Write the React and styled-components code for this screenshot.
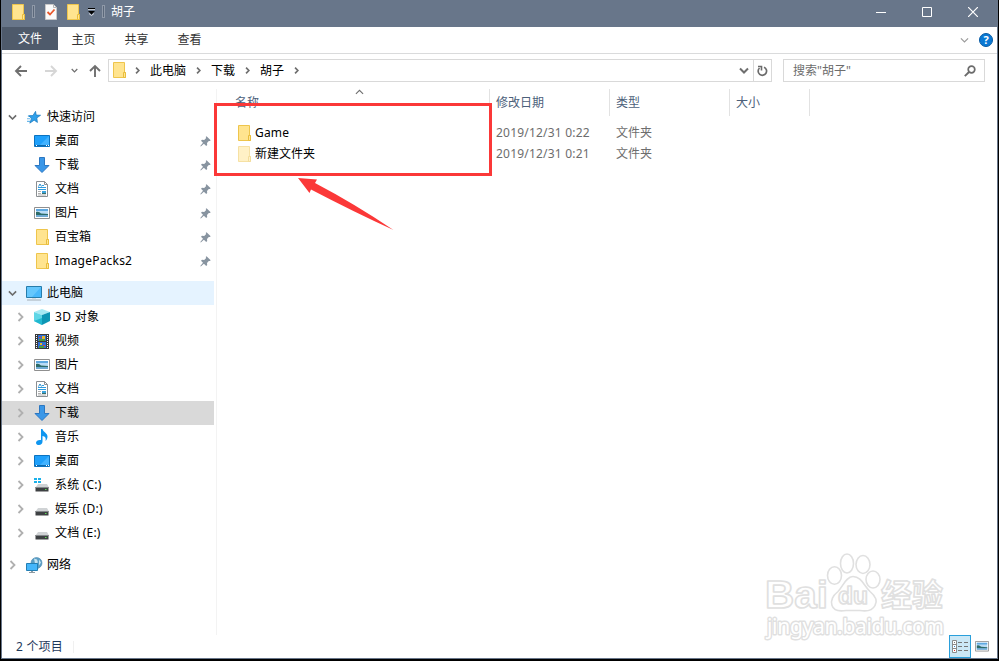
import styled, { createGlobalStyle, css } from "styled-components";

const GlobalStyle = createGlobalStyle`
  * {
    box-sizing: border-box;
  }
  body {
    margin: 0;
    background: #000;
    font-family: "Noto Sans", "Noto Sans CJK SC", sans-serif;
    font-size: 12px;
    line-height: 16px;
    color: #000;
  }
`;

const Desktop = styled.div`
  width: 999px;
  height: 661px;
  padding: 0 1px 2px;
  background: #000;
  overflow: hidden;
  position: relative;
`;

const Window = styled.div`
  height: 659px;
  display: flex;
  flex-direction: column;
  background: #fff;
  border: 1px solid #68768a;
  border-top: none;
  white-space: nowrap;
`;

const TitleBar = styled.header`
  height: 27px;
  flex: none;
  display: flex;
  align-items: flex-start;
  background: #68768a;
  color: #fff;
`;

const QuickTools = styled.div`
  flex: 1;
  height: 23px;
  display: flex;
  align-items: center;
  padding-left: 10px;
`;

const ToolSlot = styled.span`
  display: flex;
  width: ${(props) => props.$width}px;
`;

const Divider = styled.span`
  width: 3px;
  height: 13px;
  border: 1px solid #8f99a8;
  background: #5b687a;
  margin-right: ${(props) => props.$gap}px;
`;

const Caption = styled.span`
  line-height: 24px;
  height: 23px;
`;

const Controls = styled.div`
  display: flex;
  padding-right: 1px;
`;

const ControlButton = styled.span`
  width: 46px;
  height: 23px;
  display: flex;
  align-items: center;
  justify-content: center;
`;

const Ribbon = styled.nav`
  height: 27px;
  flex: none;
  display: flex;
  border-bottom: 1px solid #dadbdc;
`;

const RibbonTab = styled.span`
  width: ${(props) => props.$width || 53}px;
  height: 23px;
  line-height: 24px;
  padding: 1px 2px 0 0;
  text-align: center;
  color: #333;
  ${(props) =>
    props.$active &&
    css`
      color: #fff;
      background: #4e5a6b;
      padding-top: 0;
      padding-right: 0;
    `}
`;

const RibbonEnd = styled.div`
  margin-left: auto;
  display: flex;
  align-items: center;
  gap: 10px;
  padding-right: 4px;
`;

const AddressRow = styled.div`
  height: 35px;
  flex: none;
  display: flex;
  align-items: flex-start;
  padding: 5px 12px 0 12px;
`;

const NavButtons = styled.div`
  width: 94px;
  height: 23px;
  display: flex;
  align-items: center;
`;

const AddressBox = styled.div`
  width: 664px;
  height: 23px;
  display: flex;
  align-items: center;
  border: 1px solid #d9d9d9;
  padding-left: 4px;
`;

const AddressFolder = styled.span`
  display: flex;
  padding-bottom: 1px;
`;

const Crumb = styled.span`
  display: flex;
  align-items: center;
  line-height: 20px;
  height: 21px;
  margin-left: 8px;
  gap: 10px;
`;

const CrumbChevron = styled.span`
  display: flex;
  width: 7px;
  margin-left: ${(props) => props.$left || 0}px;
`;

const AddressEnd = styled.div`
  margin-left: auto;
  display: flex;
  height: 21px;
`;

const AddressButton = styled.span`
  display: flex;
  align-items: center;
  justify-content: center;
  width: 18px;
  ${(props) => props.$split && "border-left: 1px solid #d9d9d9;"}
`;

const SearchBox = styled.div`
  width: 202px;
  height: 23px;
  margin-left: 11px;
  padding: 0 8px 0 9px;
  display: flex;
  align-items: center;
  justify-content: space-between;
  border: 1px solid #d9d9d9;
  color: #6d6d6d;
`;

const Body = styled.div`
  flex: 1;
  min-height: 0;
  display: flex;
`;

const Sidebar = styled.aside`
  width: 215px;
  padding: 16px 2px 0 0;
  border-right: 1px solid #f3f3f3;
`;

const Group = styled.section`
  margin-bottom: 8px;
`;

const TreeRow = styled.div`
  height: 24px;
  display: flex;
  align-items: center;
  padding: 0 3px 0 ${(props) => (props.$child ? 12 : 4)}px;
  background: ${(props) => props.$background || "transparent"};
`;

const Arrow = styled.span`
  display: flex;
  justify-content: center;
  width: 12px;
  margin-right: 7px;
`;

const IconBox = styled.span`
  display: flex;
  width: 18px;
  height: 18px;
  align-items: center;
  justify-content: center;
  margin-right: 4px;
`;

const TreeLabel = styled.span`
  flex: 1;
  letter-spacing: ${(props) => props.$spacing || 0}px;
`;

const FileList = styled.main`
  flex: 1;
  display: flex;
  flex-direction: column;
`;

const Columns = styled.div`
  display: grid;
  grid-template-columns: 273px 120px 120px 80px;
  height: 27px;
`;

const ColumnHead = styled.div`
  border-right: 1px solid #e2e2e2;
  padding-left: ${(props) => (props.$first ? 18 : 6)}px;
  line-height: 27px;
  color: #4c607a;
  display: flex;
  align-items: flex-start;
`;

const SortMark = styled.span`
  display: flex;
  margin-left: 96px;
`;

const Files = styled.div`
  padding-top: 6px;
`;

const FileRow = styled.div`
  display: grid;
  grid-template-columns: 273px 120px 120px;
  height: 21px;
  line-height: 21px;
`;

const FileName = styled.div`
  display: flex;
  align-items: center;
  padding-left: 21px;
  gap: 4px;
  letter-spacing: ${(props) => props.$spacing || 0}px;
`;

const FileCell = styled.div`
  padding-left: 6px;
  color: #6d6d6d;
  letter-spacing: ${(props) => props.$spacing || 0}px;
`;

const StatusBar = styled.footer`
  height: 23px;
  flex: none;
  display: flex;
  align-items: center;
  justify-content: space-between;
  padding: 0 8px 0 14px;
  color: #1e395b;
`;

const ItemCount = styled.span`
  padding-right: 10px;
  line-height: 12px;
  letter-spacing: 0.2px;
  border-right: 1px solid #f0f0f0;
`;

const ViewButtons = styled.div`
  display: flex;
  align-items: center;
  gap: 4px;
`;

const ViewButton = styled.span`
  width: 22px;
  height: 23px;
  display: flex;
  align-items: center;
  justify-content: center;
  background: #cce8f6;
  border: 1px solid #2a9fdb;
`;

const Highlight = styled.div`
  position: absolute;
  left: 214px;
  top: 103px;
  width: 278px;
  height: 73px;
  border: 3px solid #fb3838;
`;

const Pointer = styled.svg`
  position: absolute;
  left: 294px;
  top: 174px;
`;

const Watermark = styled.svg`
  position: absolute;
  left: 760px;
  top: 548px;
`;

const FolderIcon = ({ faded }) => (
  <svg width="13" height="16" viewBox="0 0 13 16" opacity={faded ? 0.5 : 1}>
    <path d="M.5.5h11v10h1v5H.5z" fill="#ffe48f" stroke="#eec54c" />
    <path d="M10.5 10.5h2v5h-2z" fill="#ffe693" stroke="#e9bd3c" />
  </svg>
);

const CheckPageIcon = () => (
  <svg width="12" height="16" viewBox="0 0 12 16">
    <path d="M.5.5h8l3 3v12H.5z" fill="#fafafa" stroke="#c8c8c8" />
    <path d="M8.5.5v3h3" fill="none" stroke="#b5b5b5" />
    <path d="M2.5 8l2.500 2.500 4.500-5" fill="none" stroke="#e8572b" strokeWidth="1.800" />
  </svg>
);

const CustomizeIcon = () => (
  <svg width="8" height="9" viewBox="0 0 8 9">
    <path d="M0 1h7v1H0z" fill="#000" />
    <path d="M0 2h7v1H0z" fill="#c7ccd3" />
    <path d="M1 6.500l2.500 2L6 6.500" fill="none" stroke="#dfe2e6" />
    <path d="M0 4h7L3.500 7.500z" fill="#000" />
  </svg>
);

const chevrons = {
  right: ["M1.5 1l4 4-4 4", 7, 10],
  down: ["M1 1.5l4 4 4-4", 10, 7],
  up: ["M1 5.5l4-4 4 4", 10, 7],
};

const Chevron = ({ to, color = "#6e6e6e", scale = 1, weight = 1.8 }) => {
  const [d, w, h] = chevrons[to];
  return (
    <svg width={w * scale} height={h * scale} viewBox={`0 0 ${w} ${h}`}>
      <path d={d} fill="none" stroke={color} strokeWidth={weight} />
    </svg>
  );
};

const StraightArrow = ({ color, transform }) => (
  <svg width="14" height="14" viewBox="0 0 14 14">
    <path
      d="M13 7H2M7 2L2 7l5 5"
      fill="none"
      stroke={color}
      strokeWidth="1.9"
      transform={transform}
    />
  </svg>
);

const StarIcon = () => (
  <svg width="14" height="14" viewBox="0 0 16 16">
    <path d="M1 7h4M0 10h4M0 13h4" stroke="#6bb9ea" strokeWidth="1.2" />
    <path
      d="M9.800 1.500l.7 4.300 5 .2-4.300 3 .7 5.200-3.700-2.600-5 3.400 2-5.400-3.200-2.900 4.800-.4z"
      fill="#2fa0ea"
      stroke="#1879bd"
      strokeWidth=".8"
    />
  </svg>
);

const DesktopIcon = () => (
  <svg width="16" height="12" viewBox="0 0 16 12">
    <path d="M.5.5h15v11H.5z" fill="#1ea0fb" stroke="#0b73c0" />
    <path d="M15 1v9L6 10z" fill="#41b2ff" />
    <path d="M1 10.5h14" stroke="#0c69ad" />
    <path d="M2 10.500h1M12 10.500h1M14 10.500h1" stroke="#fff" />
  </svg>
);

const DownloadIcon = () => (
  <svg width="16" height="16" viewBox="0 0 16 16">
    <path d="M5.500.5h5v8H15L8 15.500 1 8.500h4.500z" fill="#3a97e8" stroke="#2c77c1" />
  </svg>
);

const DocumentIcon = () => (
  <svg width="12" height="16" viewBox="0 0 12 16">
    <path d="M.5.5h8l3 3v12H.5z" fill="#fff" stroke="#8b8f92" />
    <path d="M8.5.5v3h3" fill="none" stroke="#8b8f92" />
    <path d="M6 4.500h2M2 6.500h8M2 8.500h8" stroke="#2e9bdf" />
    <path d="M2.500 5.500L4 3l1.500 2.500" fill="none" stroke="#2e8bc9" />
    <path d="M2 10.500h3M2 12.500h3M2 14h8" stroke="#b0b0b0" />
    <path d="M6 10h4v2H6z" fill="#3aa2dc" />
    <path d="M6 12h4v1H6z" fill="#397069" />
  </svg>
);

const PictureIcon = ({ size = 16 }) => (
  <svg width={size} height={size * 0.75} viewBox="0 0 16 12">
    <path d="M.5.5h15v11H.5z" fill="#fff" stroke="#8f8f8f" />
    <path d="M2 2h12v8H2z" fill="#b9dbf5" />
    <path d="M2 2h12v2H2z" fill="#5ea8e0" />
    <path d="M2 5q3-1 5 1.500l7 .5v1H2z" fill="#2c6b68" />
    <path d="M2 8h12v2H2z" fill="#6fa9d2" />
  </svg>
);

const ComputerIcon = () => (
  <svg width="16" height="15" viewBox="0 0 16 15">
    <path d="M.5.5h15v11H.5z" fill="#48b8fb" stroke="#267cab" />
    <path d="M1 1h14L6 11H1z" fill="#79d0ff" opacity=".6" />
    <path d="M6 12h4v1H6z" fill="#d5dde2" />
    <path d="M1 14h14" stroke="#a3aeb5" />
  </svg>
);

const CubeIcon = () => (
  <svg width="16" height="16" viewBox="0 0 16 16">
    <path d="M0 3l8-3 8 3-8 3z" fill="#a6e9f3" />
    <path d="M0 3l8 3v10l-8-4z" fill="#5fd6e6" />
    <path d="M8 6l8-3v9l-8 4z" fill="#0d96b4" />
    <path d="M0 12l8-3v7z" fill="#21b8d0" />
  </svg>
);

const VideoIcon = () => (
  <svg width="14" height="15" viewBox="0 0 14 15">
    <path d="M0 0h14v15H0z" fill="#3a3a3a" />
    <path d="M1.500 1v14M12.500 1v14" stroke="#fff" strokeDasharray="1 1" />
    <path d="M3 1h8v6H3zM3 8h8v6H3z" fill="#2f6fd4" />
    <path d="M4 5h6v2H4zM4 12h5v2H4z" fill="#4c9a3e" />
    <path d="M7 2h3v3H7zM5 9h2v2H5z" fill="#e8b62c" />
    <path d="M4 3h2v1H4zM8 11h2v1H8z" fill="#db4335" />
  </svg>
);

const MusicIcon = () => (
  <svg width="12" height="16" viewBox="0 0 12 16">
    <path
      d="M5 0h1.500c.5 3 5 4 5 7.500 0 2-1 3.500-2 4.500.8-3-.2-4.500-3-5V12.500C6.500 14.500 5 16 3 16c-1.700 0-3-.9-3-2.300 0-2 2.500-3.200 5-2.700z"
      fill="#0f96f0"
    />
  </svg>
);

const DriveIcon = ({ system }) => (
  <svg width="16" height="16" viewBox="0 0 16 16">
    {system && <path d="M0 1h3v2H0zM4 1h3v2H4zM0 4h3v2H0zM4 4h3v2H4z" fill="#1bb1ea" />}
    <path d="M4 7h9l2 3.500H1.500z" fill="#d0d3d5" />
    <path d="M1.500 10h13v4.500h-13z" fill="#3e4143" />
    <path d="M1.500 10.500h13" stroke="#85898c" />
    <path d="M11 12.500h1.500" stroke="#5dde56" />
  </svg>
);

const NetworkIcon = () => (
  <svg width="17" height="16" viewBox="0 0 17 16">
    <circle cx="10.500" cy="6" r="5.500" fill="#5b9fc6" stroke="#4787ae" strokeWidth=".6" />
    <path d="M8 1.500l3 1 1 3-3 1zM13 2.500l2 3-2 3z" fill="#c6e4f1" />
    <path d="M.5 6.500h11v7H.5z" fill="#45b6fa" stroke="#237fb4" />
    <path d="M5 14h2v1H5zM3 15h6v1H3z" fill="#8d9ba3" />
  </svg>
);

const PinIcon = () => (
  <svg width="11" height="11" viewBox="0 0 11 11">
    <path
      d="M6.500.2l4.200 4-.9.900-1-.2L7 6.900l.2 2-1 1-2.300-2.200L.8 10.500l-.5-.5 2.700-3.200L1 4.700l1-1 2.200.2L6.200 2 5.700 1z"
      fill="#8894a0"
    />
  </svg>
);

const SearchIcon = () => (
  <svg width="12" height="12" viewBox="0 0 12 12" fill="none" stroke="#6b6b6b">
    <circle cx="7.500" cy="4.500" r="3.300" strokeWidth="1.700" />
    <path d="M5 7L.8 11.200" strokeWidth="1.900" />
  </svg>
);

const RefreshIcon = () => (
  <svg width="11" height="12" viewBox="0 0 11 12" fill="none" stroke="#6b6b6b">
    <path d="M7 2.200A4.200 4.200 0 1 1 2.500 3" strokeWidth="1.700" />
    <path d="M1 1.500h3.500v4" strokeWidth="1.600" />
  </svg>
);

const HelpIcon = () => (
  <svg width="14" height="14" viewBox="0 0 14 14">
    <circle cx="7" cy="7" r="6.500" fill="#0b79d4" stroke="#075aa3" />
    <text x="7" y="11" fontSize="11" fontWeight="bold" fill="#fff" textAnchor="middle">
      ?
    </text>
  </svg>
);

const DetailsIcon = () => (
  <svg width="16" height="13" viewBox="0 0 16 13">
    <path d="M.5.5h4v12h-4zM.5 4.5h4M.5 8.5h4" fill="#fff" stroke="#8b8b8b" />
    <path d="M2 2.500h1" stroke="#777" />
    <path d="M2 6.500h1" stroke="#3485c9" />
    <path d="M2 10.500h1" stroke="#e02c2c" />
    <path d="M6 2.500h4M12 2.500h4M6 6.500h4M12 6.500h4M6 10.500h4M12 10.500h4" stroke="#777" />
  </svg>
);

const quickAccess = [
  { label: "桌面", icon: <DesktopIcon /> },
  { label: "下载", icon: <DownloadIcon /> },
  { label: "文档", icon: <DocumentIcon /> },
  { label: "图片", icon: <PictureIcon /> },
  { label: "百宝箱", icon: <FolderIcon /> },
  { label: "ImagePacks2", icon: <FolderIcon />, spacing: 0.2 },
];

const computer = [
  { label: "3D 对象", icon: <CubeIcon />, spacing: 0.3 },
  { label: "视频", icon: <VideoIcon /> },
  { label: "图片", icon: <PictureIcon /> },
  { label: "文档", icon: <DocumentIcon /> },
  { label: "下载", icon: <DownloadIcon />, selected: true },
  { label: "音乐", icon: <MusicIcon /> },
  { label: "桌面", icon: <DesktopIcon /> },
  { label: "系统 (C:)", icon: <DriveIcon system />, spacing: 0.2 },
  { label: "娱乐 (D:)", icon: <DriveIcon />, spacing: 0.2 },
  { label: "文档 (E:)", icon: <DriveIcon />, spacing: 0.2 },
];

const files = [
  { name: "Game", date: "2019/12/31 0:22", type: "文件夹" },
  { name: "新建文件夹", date: "2019/12/31 0:21", type: "文件夹", faded: true },
];

const TreeItem = ({ label, icon, arrow, child, pinned, background, spacing }) => (
  <TreeRow $child={child} $background={background}>
    <Arrow>
      {arrow && (
        <Chevron
          to={arrow}
          color={arrow === "down" ? "#6b6b6b" : "#b0b0b0"}
          scale={arrow === "down" ? 0.9 : 1}
        />
      )}
    </Arrow>
    <IconBox>{icon}</IconBox>
    <TreeLabel $spacing={spacing}>{label}</TreeLabel>
    {pinned && <PinIcon />}
  </TreeRow>
);

const NavigationPane = () => (
  <Sidebar>
    <Group>
      <TreeItem label="快速访问" icon={<StarIcon />} arrow="down" />
      {quickAccess.map((item) => (
        <TreeItem key={item.label} {...item} child pinned />
      ))}
    </Group>
    <Group>
      <TreeItem label="此电脑" icon={<ComputerIcon />} arrow="down" background="#e5f3ff" />
      {computer.map((item) => (
        <TreeItem
          key={item.label}
          {...item}
          child
          arrow="right"
          background={item.selected ? "#d9d9d9" : undefined}
        />
      ))}
    </Group>
    <Group>
      <TreeItem label="网络" icon={<NetworkIcon />} arrow="right" />
    </Group>
  </Sidebar>
);

const BaiduMark = () => (
  <Watermark
    width="190"
    height="96"
    viewBox="0 0 190 96"
    fill="#fff"
    stroke="#e0e0e0"
    strokeWidth="1.6"
    strokeLinejoin="round"
    fontFamily='"Liberation Sans", "Noto Sans CJK SC", sans-serif'
  >
    <text x="5" y="60" fontSize="39" fontWeight="bold" textLength="63" lengthAdjust="spacingAndGlyphs">
      Bai
    </text>
    <ellipse cx="74.500" cy="27.500" rx="7" ry="8.800" />
    <ellipse cx="87" cy="15.500" rx="6.500" ry="9.500" />
    <ellipse cx="103" cy="16.500" rx="7" ry="9" />
    <ellipse cx="113" cy="31.500" rx="7" ry="8.500" />
    <path d="M93 28.500c8 0 11 9 17 15 6 5 8 9 5 14-3 6-9 6-15 5H86c-6 1-12 1-14-5-2-6 1-10 6-14 5-5 8-15 15-15z" />
    <text x="78" y="56" fontSize="23" fontWeight="bold" textLength="30" lengthAdjust="spacingAndGlyphs">
      du
    </text>
    <text x="121" y="58" fontSize="31" fontWeight="bold">
      经验
    </text>
    <text
      x="7"
      y="86"
      fontSize="21"
      fontFamily="Noto Sans"
      textLength="177"
      strokeWidth="2.8"
      paintOrder="stroke"
    >
      jingyan.baidu.com
    </text>
  </Watermark>
);

const App = () => {
  return (
    <Desktop>
      <GlobalStyle />
      <Window>
        <TitleBar>
          <QuickTools>
            <ToolSlot $width={20}>
              <FolderIcon />
            </ToolSlot>
            <Divider $gap={10} />
            <ToolSlot $width={22}>
              <CheckPageIcon />
            </ToolSlot>
            <ToolSlot $width={21}>
              <FolderIcon />
            </ToolSlot>
            <ToolSlot $width={14}>
              <CustomizeIcon />
            </ToolSlot>
            <Divider $gap={6} />
            <Caption>胡子</Caption>
          </QuickTools>
          <Controls>
            <ControlButton>
              <svg width="10" height="10">
                <path d="M0 5.500h10" stroke="#fff" />
              </svg>
            </ControlButton>
            <ControlButton>
              <svg width="10" height="10">
                <path d="M.5.500h9v9h-9z" fill="none" stroke="#fff" />
              </svg>
            </ControlButton>
            <ControlButton>
              <svg width="10" height="10">
                <path d="M0 0l10 10M10 0L0 10" stroke="#fff" strokeWidth="1.2" />
              </svg>
            </ControlButton>
          </Controls>
        </TitleBar>
        <Ribbon>
          <RibbonTab $active $width={56}>
            文件
          </RibbonTab>
          <RibbonTab>主页</RibbonTab>
          <RibbonTab>共享</RibbonTab>
          <RibbonTab>查看</RibbonTab>
          <RibbonEnd>
            <Chevron to="down" color="#9a9a9a" weight={1.3} scale={0.9} />
            <HelpIcon />
          </RibbonEnd>
        </Ribbon>
        <AddressRow>
          <NavButtons>
            <ToolSlot $width={30}>
              <StraightArrow color="#6f6f6f" />
            </ToolSlot>
            <ToolSlot $width={27}>
              <StraightArrow color="#d6d6d6" transform="rotate(180 7 7)" />
            </ToolSlot>
            <ToolSlot $width={17}>
              <Chevron to="down" scale={0.7} />
            </ToolSlot>
            <StraightArrow color="#6f6f6f" transform="rotate(90 7 7)" />
          </NavButtons>
          <AddressBox>
            <AddressFolder>
              <FolderIcon />
            </AddressFolder>
            <CrumbChevron $left={9}>
              <Chevron to="right" scale={0.7} weight={2.4} />
            </CrumbChevron>
            {["此电脑", "下载", "胡子"].map((crumb) => (
              <Crumb key={crumb}>
                {crumb}
                <CrumbChevron>
                  <Chevron to="right" scale={0.7} weight={2.4} />
                </CrumbChevron>
              </Crumb>
            ))}
            <AddressEnd>
              <AddressButton>
                <Chevron to="down" weight={2} />
              </AddressButton>
              <AddressButton $split>
                <RefreshIcon />
              </AddressButton>
            </AddressEnd>
          </AddressBox>
          <SearchBox>
            搜索"胡子"
            <SearchIcon />
          </SearchBox>
        </AddressRow>
        <Body>
          <NavigationPane />
          <FileList>
            <Columns>
              <ColumnHead $first>
                名称
                <SortMark>
                  <Chevron to="up" weight={1.2} scale={0.9} />
                </SortMark>
              </ColumnHead>
              <ColumnHead>修改日期</ColumnHead>
              <ColumnHead>类型</ColumnHead>
              <ColumnHead>大小</ColumnHead>
            </Columns>
            <Files>
              {files.map((file) => (
                <FileRow key={file.name}>
                  <FileName $spacing={file.faded ? 0 : 0.2}>
                    <FolderIcon faded={file.faded} />
                    {file.name}
                  </FileName>
                  <FileCell $spacing={0.2}>{file.date}</FileCell>
                  <FileCell>{file.type}</FileCell>
                </FileRow>
              ))}
            </Files>
          </FileList>
        </Body>
        <StatusBar>
          <ItemCount>2 个项目</ItemCount>
          <ViewButtons>
            <ViewButton>
              <DetailsIcon />
            </ViewButton>
            <PictureIcon size={14} />
          </ViewButtons>
        </StatusBar>
      </Window>
      <Highlight />
      <Pointer width="102" height="60" viewBox="0 0 102 60">
        <path d="M4 4l19 1.500-2 3.500q40 21 78.500 47Q60 38 17 15.500l-1.500 3.500z" fill="#fb3838" />
      </Pointer>
      <BaiduMark />
    </Desktop>
  );
};

export default App;
